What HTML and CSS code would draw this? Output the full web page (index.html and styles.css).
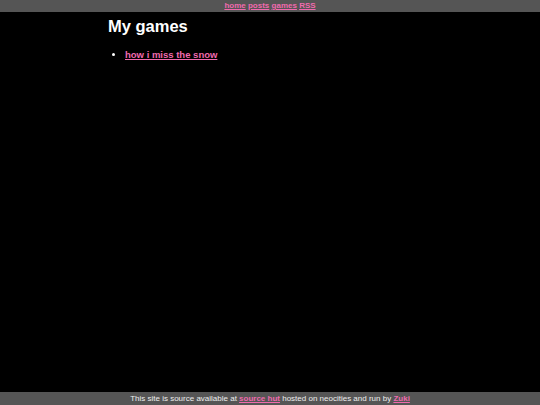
FILE: index.html
```html
<!DOCTYPE html>
<html>
<head>
<meta charset="utf-8">
<link rel="stylesheet" href="styles.css">
</head>
<body>
<nav class="topnav">
  <a href="#">home</a> <a href="#">posts</a> <a href="#">games</a> <a href="#">RSS</a>
</nav>
<main class="content">
  <h1 class="title">My games</h1>
  <ul class="games">
    <li><a href="#">how i miss the snow</a></li>
  </ul>
</main>
<footer class="foot">
  This site is source available at <a href="#">source hut</a> hosted on neocities and run by <a href="#">Zuki</a>
</footer>
</body>
</html>
```
FILE: styles.css
```css
html, body {
  margin: 0;
  padding: 0;
  height: 100%;
}
body {
  background: #000;
  color: #fff;
  font-family: "Liberation Sans", Arial, sans-serif;
  display: flex;
  flex-direction: column;
}
a {
  color: #f06aae;
}
.topnav {
  background: #555;
  text-align: center;
  font-size: 8px;
  font-weight: bold;
  line-height: 12px;
  height: 12px;
}
.content {
  flex: 1;
  width: 60%;
  margin: 0 auto;
}
.title {
  font-size: 16.5px;
  margin: 5px 0 13px;
}
.games {
  margin: 0;
  padding-left: 17px;
  font-size: 9.5px;
  font-weight: bold;
}
.foot {
  background: #555;
  color: #eee;
  text-align: center;
  font-size: 8px;
  line-height: 13px;
  height: 13px;
}
.foot a {
  font-weight: bold;
}
```
